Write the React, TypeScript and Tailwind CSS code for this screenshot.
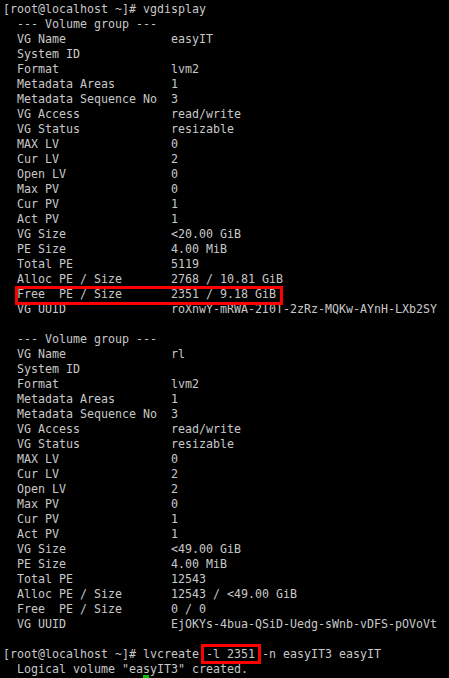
const ROWS1: [string, string][] = [
  ["VG Name", "easyIT"],
  ["System ID", ""],
  ["Format", "lvm2"],
  ["Metadata Areas", "1"],
  ["Metadata Sequence No", "3"],
  ["VG Access", "read/write"],
  ["VG Status", "resizable"],
  ["MAX LV", "0"],
  ["Cur LV", "2"],
  ["Open LV", "0"],
  ["Max PV", "0"],
  ["Cur PV", "1"],
  ["Act PV", "1"],
  ["VG Size", "<20.00 GiB"],
  ["PE Size", "4.00 MiB"],
  ["Total PE", "5119"],
  ["Alloc PE / Size", "2768 / 10.81 GiB"],
  ["Free  PE / Size", "2351 / 9.18 GiB"],
  ["VG UUID", "roXnwY-mRWA-2I0T-2zRz-MQKw-AYnH-LXb2SY"],
];

const ROWS2: [string, string][] = [
  ["VG Name", "rl"],
  ["System ID", ""],
  ["Format", "lvm2"],
  ["Metadata Areas", "1"],
  ["Metadata Sequence No", "3"],
  ["VG Access", "read/write"],
  ["VG Status", "resizable"],
  ["MAX LV", "0"],
  ["Cur LV", "2"],
  ["Open LV", "2"],
  ["Max PV", "0"],
  ["Cur PV", "1"],
  ["Act PV", "1"],
  ["VG Size", "<49.00 GiB"],
  ["PE Size", "4.00 MiB"],
  ["Total PE", "12543"],
  ["Alloc PE / Size", "12543 / <49.00 GiB"],
  ["Free  PE / Size", "0 / 0"],
  ["VG UUID", "EjOKYs-4bua-QSiD-Uedg-sWnb-vDFS-pOVoVt"],
];

const fmt = (k: string, v: string) => k.padEnd(22, " ") + v;

function Block({ rows, mark }: { rows: [string, string][]; mark?: string }) {
  return (
    <>
      <div>{"  --- Volume group ---"}</div>
      {rows.map(([k, v]) => (
        <div key={k}>
          {"  "}
          {mark === k ? (
            <span className="relative">
              {fmt(k, v)}
              <span className="absolute left-[-2px] right-[-7px] top-[-1px] bottom-[-4px] border-[3px] border-[#ff0000]" />
            </span>
          ) : (
            fmt(k, v)
          )}
        </div>
      ))}
      <div>&nbsp;</div>
    </>
  );
}

export default function App() {
  return (
    <div className="w-[449px] h-[678px] bg-black overflow-hidden">
      <div
        className="pl-[3px] pt-[2px] text-[11.63px] leading-[15px] text-[#c8c8c8] whitespace-pre"
        style={{ fontFamily: '"DejaVu Sans Mono", monospace' }}
      >
        <div>[root@localhost ~]# vgdisplay</div>
        <Block rows={ROWS1} mark="Free  PE / Size" />
        <Block rows={ROWS2} />
        <div>
          {"[root@localhost ~]# lvcreate "}
          <span className="relative">
            -l 2351
            <span className="absolute left-[-5px] right-[-6px] top-[-3px] bottom-[-3px] border-[3px] border-[#ff0000]" />
          </span>
          {" -n easyIT3 easyIT"}
        </div>
        <div>{'  Logical volume "easyIT3" created.'}</div>
        <div className="relative">
          <span className="absolute left-[140px] top-[-2px] w-[6px] h-[3px] bg-[#00c000]" />
        </div>
      </div>
    </div>
  );
}
